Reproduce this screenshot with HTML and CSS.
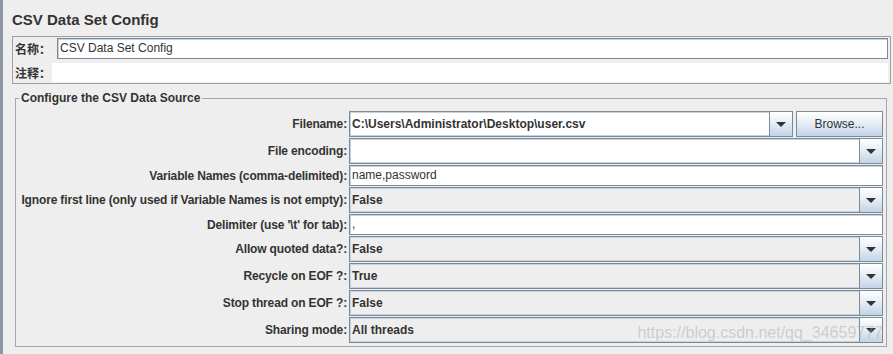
FILE: index.html
```html
<!DOCTYPE html>
<html lang="zh-CN">
<head>
    <meta charset="UTF-8">
    <title>CSV Data Set Config</title>
    <link rel="stylesheet" href="styles.css">
</head>
<body>
    <div class="window">
        <h1 class="title">CSV Data Set Config</h1>
        <div class="name-panel">
            <div class="name-row">
                <span class="name-label">名称：</span>
                <div class="text-field name-field">CSV Data Set Config</div>
            </div>
            <div class="name-row comment-row">
                <span class="name-label comment-label">注释：</span>
                <div class="comment-field"></div>
            </div>
        </div>
        <fieldset class="source">
            <legend>Configure the CSV Data Source</legend>
            <div class="form-grid">
                <span class="field-label">Filename:</span>
                <div class="file-row">
                    <div class="combo editable">
                        <span class="combo-value">C:\Users\Administrator\Desktop\user.csv</span>
                        <span class="combo-arrow"></span>
                    </div>
                    <button class="browse">Browse...</button>
                </div>

                <span class="field-label">File encoding:</span>
                <div class="combo editable">
                    <span class="combo-value"></span>
                    <span class="combo-arrow"></span>
                </div>

                <span class="field-label">Variable Names (comma-delimited):</span>
                <div class="text-field">name,password</div>

                <span class="field-label">Ignore first line (only used if Variable Names is not empty):</span>
                <div class="combo">
                    <span class="combo-value">False</span>
                    <span class="combo-arrow"></span>
                </div>

                <span class="field-label">Delimiter (use '\t' for tab):</span>
                <div class="text-field">,</div>

                <span class="field-label">Allow quoted data?:</span>
                <div class="combo">
                    <span class="combo-value">False</span>
                    <span class="combo-arrow"></span>
                </div>

                <span class="field-label">Recycle on EOF ?:</span>
                <div class="combo">
                    <span class="combo-value">True</span>
                    <span class="combo-arrow"></span>
                </div>

                <span class="field-label">Stop thread on EOF ?:</span>
                <div class="combo">
                    <span class="combo-value">False</span>
                    <span class="combo-arrow"></span>
                </div>

                <span class="field-label">Sharing mode:</span>
                <div class="combo">
                    <span class="combo-value">All threads</span>
                    <span class="combo-arrow"></span>
                </div>
            </div>
        </fieldset>
        <div class="watermark">https://blog.csdn.net/qq_34659777</div>
    </div>
</body>
</html>
```

FILE: styles.css
```css
body {
    margin: 0;
    background: #eeeeee;
    font-family: 'Liberation Sans', Arial, 'Noto Sans CJK SC', sans-serif;
    font-size: 12px;
    color: #333;
}
.window {
    position: relative;
    height: 354px;
    box-sizing: border-box;
    border-left: 3px solid #8d98a4;
    padding: 11px 2px 0 9px;
    overflow: hidden;
}
.title {
    margin: 0 0 7px 0;
    font-size: 15px;
    line-height: 18px;
    font-weight: bold;
    color: #333;
}
.name-panel {
    border: 1px solid #a0a0a0;
    padding: 1px 2px 1px 1px;
}
.name-row {
    display: flex;
    align-items: center;
    height: 21px;
}
.name-row.comment-row {
    margin-top: 4px;
    height: 19px;
}
.name-label {
    width: 43px;
    flex-shrink: 0;
    padding-left: 1px;
    box-sizing: border-box;
    font-weight: bold;
    font-family: 'Noto Sans CJK SC', sans-serif;
    font-size: 12px;
}
.comment-label {
    width: 38px;
}
.name-field {
    flex: 1;
}
.comment-field {
    flex: 1;
    height: 19px;
    background: #fff;
}
.text-field {
    height: 21px;
    box-sizing: border-box;
    border: 1px solid #7a8a99;
    box-shadow: inset 1px 1px 0 #c5d3e1;
    background: #fff;
    padding-left: 2px;
    line-height: 19px;
    white-space: nowrap;
}
.source {
    margin: 7px 4px 0 3px;
    padding: 6px 3px 3px 3px;
    border: 1px solid #a6a6a6;
}
.source legend {
    padding: 0 2px;
    font-weight: bold;
    line-height: 14px;
}
.form-grid {
    display: grid;
    grid-template-columns: 328px 1fr;
    column-gap: 2px;
    row-gap: 1px;
}
.field-label {
    align-self: center;
    text-align: right;
    font-weight: bold;
    letter-spacing: -0.15px;
    white-space: nowrap;
}
.file-row {
    display: flex;
    gap: 3px;
}
.file-row .combo {
    flex: 1;
}
.combo {
    display: flex;
    height: 26px;
    box-sizing: border-box;
    border: 1px solid #7a8a99;
    background: #eeeeee;
    box-shadow: inset 1px 1px 0 #c5d3e1, inset -1px -1px 0 #c5d3e1;
}
.combo.editable {
    background: #fff;
}
.combo-value {
    flex: 1;
    padding-left: 2px;
    line-height: 24px;
    font-weight: bold;
    white-space: nowrap;
    overflow: hidden;
}
.combo-arrow {
    width: 22px;
    flex-shrink: 0;
    border-left: 1px solid #7a8a99;
    background: linear-gradient(#ffffff, #e6eef6 45%, #c2d4e7);
    display: flex;
    align-items: center;
    justify-content: center;
}
.combo-arrow::before {
    content: '';
    border-left: 5px solid transparent;
    border-right: 5px solid transparent;
    border-top: 5px solid #333;
}
.browse {
    width: 87px;
    height: 26px;
    box-sizing: border-box;
    border: 1px solid #7a8a99;
    background: linear-gradient(#ffffff, #e6eef6 45%, #c2d4e7);
    font-family: 'Liberation Sans', Arial, sans-serif;
    font-size: 12px;
    color: #333;
    padding: 0;
}
.watermark {
    position: absolute;
    right: 10px;
    bottom: 12px;
    font-size: 16px;
    color: rgba(175, 175, 175, 0.55);
    white-space: nowrap;
}
```
